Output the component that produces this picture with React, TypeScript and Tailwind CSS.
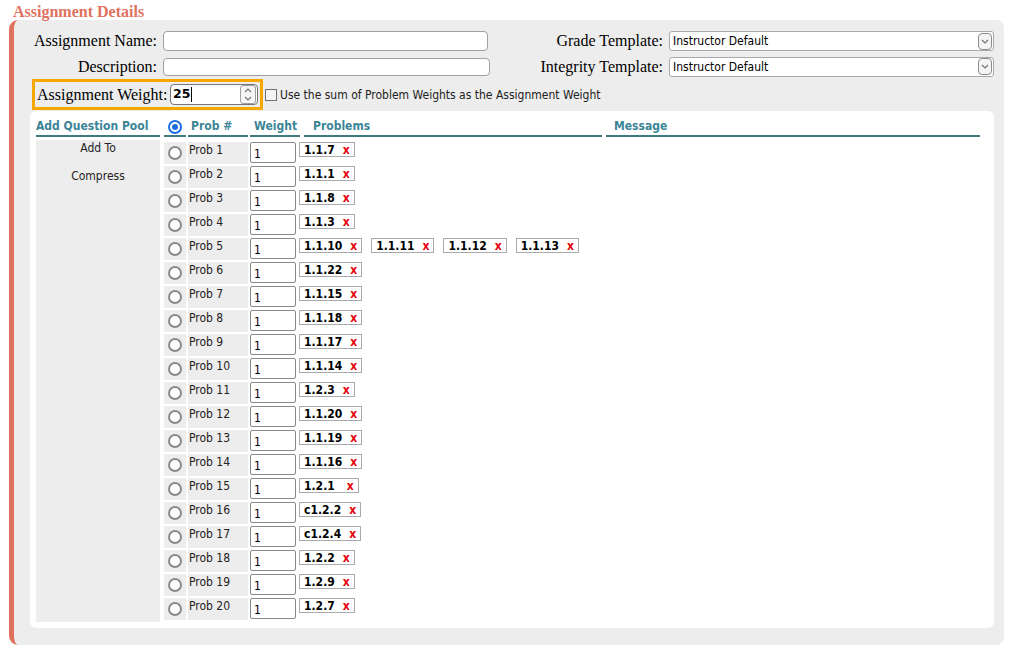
// AssignmentDetails — ödev ayrıntıları ve problem havuzu
import React from "react"

type Row = { n: number; probs: string[] }

const ROWS: Row[] = [
  { n: 1, probs: ["1.1.7"] },
  { n: 2, probs: ["1.1.1"] },
  { n: 3, probs: ["1.1.8"] },
  { n: 4, probs: ["1.1.3"] },
  { n: 5, probs: ["1.1.10", "1.1.11", "1.1.12", "1.1.13"] },
  { n: 6, probs: ["1.1.22"] },
  { n: 7, probs: ["1.1.15"] },
  { n: 8, probs: ["1.1.18"] },
  { n: 9, probs: ["1.1.17"] },
  { n: 10, probs: ["1.1.14"] },
  { n: 11, probs: ["1.2.3"] },
  { n: 12, probs: ["1.1.20"] },
  { n: 13, probs: ["1.1.19"] },
  { n: 14, probs: ["1.1.16"] },
  { n: 15, probs: ["1.2.1 "] },
  { n: 16, probs: ["c1.2.2"] },
  { n: 17, probs: ["c1.2.4"] },
  { n: 18, probs: ["1.2.2"] },
  { n: 19, probs: ["1.2.9"] },
  { n: 20, probs: ["1.2.7"] },
]

const serif = "font-['Liberation_Serif',serif] text-[16px] text-black"
const sans = "font-['DejaVu_Sans_Condensed','DejaVu_Sans',sans-serif] text-[12px]"

const Chevron = ({ up = false }: { up?: boolean }) => (
  <svg width="8" height="5" viewBox="0 0 8 5" className="block">
    <path
      d={up ? "M1 4 L4 1 L7 4" : "M1 1 L4 4 L7 1"}
      fill="none"
      stroke="#707070"
      strokeWidth="1.1"
    />
  </svg>
)

const SelectBox = () => (
  <div className="ml-[6px] w-[325px] h-[20px] rounded-[3px] border border-[#a9a9a9] bg-white flex items-center">
    <span className={`${sans} flex-1 pl-[3px] text-black leading-none`}>Instructor Default</span>
    <div className="mr-[1px] w-[14px] h-[17px] rounded-[4px] border border-[#8c8c8c] bg-[#f4f4f4] flex items-center justify-center">
      <Chevron />
    </div>
  </div>
)

const Radio = ({ checked = false }: { checked?: boolean }) =>
  checked ? (
    <span className="w-[14px] h-[14px] rounded-full border-2 border-[#1a6fe6] bg-white flex items-center justify-center">
      <span className="w-[6px] h-[6px] rounded-full bg-[#1a6fe6]" />
    </span>
  ) : (
    <span className="w-[14px] h-[14px] rounded-full border-2 border-[#8a8a8a] bg-white" />
  )

const Chip = ({ label }: { label: string }) => {
  const wide = label.endsWith(" ")
  return (
    <div className="h-[15px] flex items-center border border-[#aaaaaa] bg-white pl-[4px] pr-[4px]">
      <span className={`${sans} font-bold text-black leading-none`}>{label.trim()}</span>
      <span className={`${sans} font-bold text-[#e8000b] leading-none ${wide ? "ml-[12px]" : "ml-[8px]"}`}>x</span>
    </div>
  )
}

export default function App() {
  const hdr = `${sans} font-bold text-[#3b8597] h-[19px] leading-[17px] border-b-2 border-[#3e7c82]`

  return (
    <div className="min-h-screen bg-white">
      <div className="h-[20px] pl-[13px] pt-[3px] font-['Liberation_Serif',serif] font-bold text-[16px] leading-[17px] text-[#e0725f]">
        Assignment Details
      </div>

      <div className="ml-[9px] w-[995px] h-[625px] border-l-[5px] border-[#df725f] rounded-l-[9px] rounded-r-[8px] bg-[#ededed] pt-[8px]">
        {/* Ad / şablon satırları */}
        <div className="flex items-center h-[26px]">
          <label className={`${serif} w-[143px] text-right`}>Assignment Name:</label>
          <div className="ml-[6px] w-[325px] h-[20px] rounded-[4px] border border-[#a0a0a0] bg-white" />
          <label className={`${serif} w-[175px] text-right`}>Grade Template:</label>
          <SelectBox />
        </div>
        <div className="flex items-center h-[25px]">
          <label className={`${serif} w-[143px] text-right`}>Description:</label>
          <div className="ml-[6px] w-[327px] h-[18px] rounded-[4px] border border-[#a0a0a0] bg-white" />
          <label className={`${serif} w-[173px] text-right`}>Integrity Template:</label>
          <SelectBox />
        </div>

        {/* Ağırlık */}
        <div className="flex items-center h-[31px]">
          <div className="ml-[18px] w-[231px] h-[31px] border-[3px] border-[#f6a800] flex items-center pl-[2px]">
            <label className={`${serif} w-[133px] whitespace-nowrap`}>Assignment Weight:</label>
            <div className="w-[88px] h-[21px] rounded-[4px] border border-[#767676] bg-white flex items-center">
              <span className="pl-[2px] font-['DejaVu_Sans',sans-serif] text-[12.5px] font-semibold text-black leading-none">25</span>
              <span className="w-px h-[15px] bg-black ml-[1px]" />
              <div className="ml-auto mr-[1px] w-[16px] h-[19px] rounded-[3px] border border-[#a0a0a0] bg-[#f5f5f5] flex flex-col items-center justify-center gap-[3px]">
                <Chevron up />
                <Chevron />
              </div>
            </div>
          </div>
          <span className="ml-[2px] w-[12px] h-[12px] border border-[#707070] bg-[#f4f4f4]" />
          <span className={`${sans} ml-[3px] text-[#222] text-[12.2px]`}>Use the sum of Problem Weights as the Assignment Weight</span>
        </div>

        {/* Problem havuzu */}
        <div className="ml-[16px] mt-[1px] w-[964px] h-[517px] rounded-[6px] bg-white pl-[6px] pt-[7px]">
          <div className="flex">
            <div className={`${hdr} w-[124px]`}>Add Question Pool</div>
            <div className={`${hdr} ml-[4px] w-[22px] flex items-center justify-center`}>
              <Radio checked />
            </div>
            <div className={`${hdr} ml-[2px] w-[60px] pl-[3px]`}>Prob #</div>
            <div className={`${hdr} ml-[2px] w-[50px] pl-[4px]`}>Weight</div>
            <div className={`${hdr} ml-[4px] w-[298px] pl-[9px]`}>Problems</div>
            <div className={`${hdr} ml-[4px] w-[374px] pl-[8px]`}>Message</div>
          </div>

          <div className="flex mt-[3px]">
            <div className={`${sans} w-[124px] h-[482px] bg-[#ededed] text-center text-[#222] leading-[16px]`}>
              <div className="h-[28px]">Add To</div>
              <div>Compress</div>
            </div>
            <div className="ml-[4px] pt-[2px] flex flex-col gap-[2px]">
              {ROWS.map((r) => (
                <div key={r.n} className="flex h-[22px]">
                  <div className="w-[22px] h-[22px] bg-[#ededed] flex items-center justify-center">
                    <Radio />
                  </div>
                  <div className={`${sans} ml-[2px] w-[60px] h-[22px] bg-[#ededed] pl-[1px] pt-[1px] leading-[15px] text-[#222]`}>
                    Prob {r.n}
                  </div>
                  <div className="ml-[2px] w-[46px] h-[21px] rounded-[2px] border border-[#8a8a8a] bg-white pl-[3px] pt-[5px]">
                    <span className={`${sans} block leading-[13px] text-black`}>1</span>
                  </div>
                  <div className="ml-[3px] flex items-start gap-[9px]">
                    {r.probs.map((p) => (
                      <Chip key={p} label={p} />
                    ))}
                  </div>
                </div>
              ))}
            </div>
          </div>
        </div>
      </div>
    </div>
  )
}
